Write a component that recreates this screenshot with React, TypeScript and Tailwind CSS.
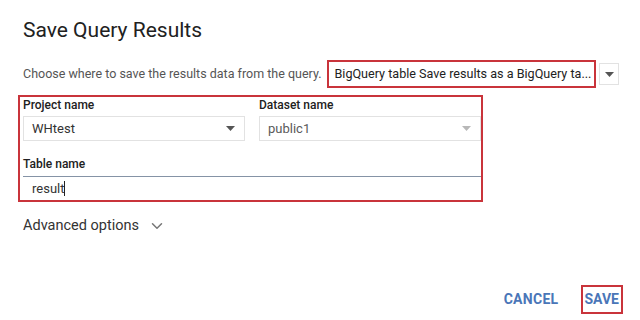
import type { FC } from "react";
import { ChevronDown } from "lucide-react";

const Caret: FC<{ light?: boolean }> = ({ light }) => (
  <svg width="9" height="5" viewBox="0 0 9 5" className={light ? "text-[#b8b8b8]" : "text-[#555555]"}>
    <path d="M0 0h9L4.5 5z" fill="currentColor" />
  </svg>
);

const SelectBox: FC<{ value: string; light?: boolean }> = ({ value, light }) => (
  <div className="flex h-[25px] items-center justify-between border border-[#e2e2e2] pl-[8px] pr-[9px]">
    <span className={`text-[13px] ${light ? "text-[#5a5a5a]" : "text-[#333333]"}`}>{value}</span>
    <Caret light={light} />
  </div>
);

const App: FC = () => {
  return (
    <div className="h-[320px] w-[640px] overflow-hidden bg-white pl-[23px] font-['Roboto',sans-serif]">
      <h1 className="mt-[18px] text-[21px] leading-[24px] text-[#212121]">Save Query Results</h1>

      {/* Destination */}
      <div className="mt-[18px] flex items-center">
        <span className="text-[12.5px] text-[#555555]">Choose where to save the results data from the query.</span>
        <div className="ml-[6px] flex h-[28px] w-[269px] items-center border-2 border-[#c9343b] pl-[5px]">
          <span className="text-[12.6px] whitespace-nowrap text-[#222222]">BigQuery table Save results as a BigQuery ta...</span>
        </div>
        <div className="ml-[3px] flex h-[22px] w-[20px] items-center justify-center border border-[#e2e2e2]">
          <Caret />
        </div>
      </div>

      {/* Fields */}
      <div className="mt-[7px] ml-[-5px] w-[465px] border-2 border-[#c9343b] pl-[3px] pr-0">
        <div className="grid grid-cols-[222px_222px] gap-x-[14px] pt-[1px]">
          <div>
            <div className="text-[12px] leading-[14px] font-medium text-[#212121]">Project name</div>
            <div className="mt-[4px]">
              <SelectBox value="WHtest" />
            </div>
          </div>
          <div>
            <div className="text-[12px] leading-[14px] font-medium text-[#212121]">Dataset name</div>
            <div className="mt-[4px]">
              <SelectBox value="public1" light />
            </div>
          </div>
        </div>
        <div className="mt-[16px] text-[12px] leading-[14px] font-medium text-[#212121]">Table name</div>
        <div className="mt-[5px] flex h-[24px] w-[458px] items-center border-t-[1.5px] border-[#8593a6] pl-[9px]">
          <span className="text-[13px] text-[#333333]">result</span>
          <span className="h-[15px] w-px bg-[#222222]" />
        </div>
      </div>

      {/* Advanced */}
      <div className="mt-[15px] flex items-center gap-[9px] text-[#333333]">
        <span className="text-[14.5px] leading-[18px]">Advanced options</span>
        <ChevronDown size={18} strokeWidth={2} className="text-[#777777]" />
      </div>

      {/* Actions */}
      <div className="mt-[50px] flex items-center justify-end pr-[17px]">
        <button className="text-[14px] font-bold tracking-[0.3px] text-[#4a76b8]">CANCEL</button>
        <div className="ml-[22px] flex h-[29px] items-center border-2 border-[#c9343b] px-[2px]">
          <button className="text-[14px] font-bold text-[#4a76b8]">SAVE</button>
        </div>
      </div>
    </div>
  );
};

export default App;
